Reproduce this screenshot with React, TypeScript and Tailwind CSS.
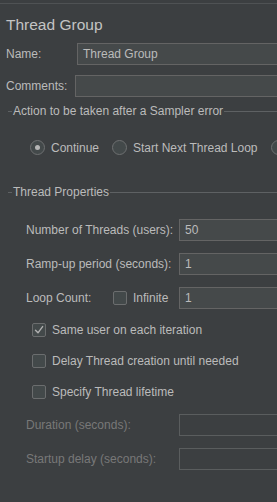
import React from "react";

function Field({ value = "", disabled = false, className = "" }: { value?: string; disabled?: boolean; className?: string }) {
  return (
    <div
      className={
        "h-[22px] flex-1 -mr-[20px] flex items-center pl-[5px] border " +
        (disabled ? "bg-[#3c3f41] border-[#5a5d5e]" : "bg-[#45494a] border-[#646464]") +
        " " +
        className
      }
    >
      <span className="text-[12px] text-[#bbbbbb] leading-none">{value}</span>
    </div>
  );
}

function Legend({ text }: { text: string }) {
  return (
    <div className="h-[14px] flex items-center pl-[8px]">
      <div className="w-[4px] h-px bg-[#5e6163]" />
      <span className="px-[1px] text-[12px] text-[#bbbbbb] leading-none">{text}</span>
      <div className="flex-1 h-px bg-[#5e6163]" />
    </div>
  );
}

function Radio({ checked = false }: { checked?: boolean }) {
  return (
    <div className="w-[15px] h-[15px] shrink-0 rounded-full border border-[#6e7071] bg-[#43494a] flex items-center justify-center">
      {checked && <div className="w-[5px] h-[5px] rounded-full bg-[#b5b5b5]" />}
    </div>
  );
}

function Check({ checked = false }: { checked?: boolean }) {
  return (
    <div className="w-[14px] h-[14px] shrink-0 rounded-[2px] border border-[#6b6d6e] bg-[#43494a] flex items-center justify-center">
      {checked && (
        <svg width="10" height="10" viewBox="0 0 10 10" fill="none">
          <path d="M1.5 5.2 L4 7.8 L8.6 1.6" stroke="#b0b0b0" strokeWidth="1.4" strokeLinecap="round" strokeLinejoin="round" />
        </svg>
      )}
    </div>
  );
}

export default function App() {
  return (
    <div
      className="w-[277px] h-[502px] overflow-hidden bg-[#3c3f41] text-[#bbbbbb] text-[12px]"
      style={{ fontFamily: '"Liberation Sans", Arial, sans-serif' }}
    >
      <div className="h-[3px]" />
      <div className="h-px bg-[#4f5254]" />

      <div className="mt-[11px] h-[20px] pl-[6px] flex items-center">
        <h1 className="text-[15.5px] leading-none text-[#c4c4c4]">Thread Group</h1>
      </div>

      {/* name + comments */}
      <div className="mt-[8px] flex items-center pl-[6px]">
        <span className="w-[71px] leading-none">Name:</span>
        <Field value="Thread Group" />
      </div>
      <div className="mt-[10px] flex items-center pl-[6px]">
        <span className="w-[69px] leading-none">Comments:</span>
        <Field />
      </div>

      {/* sampler error action */}
      <div className="mt-[7px]">
        <Legend text="Action to be taken after a Sampler error" />
      </div>
      <div className="mt-[22px] h-[15px] flex items-center pl-[30px] whitespace-nowrap">
        <Radio checked />
        <span className="ml-[6px] w-[61px] shrink-0 leading-none">Continue</span>
        <Radio />
        <span className="ml-[6px] w-[138px] shrink-0 leading-none">Start Next Thread Loop</span>
        <Radio />
      </div>

      {/* thread properties */}
      <div className="mt-[30px]">
        <Legend text="Thread Properties" />
      </div>

      <div className="mt-[20px] flex items-center pl-[26px]">
        <span className="w-[153px] leading-none">Number of Threads (users):</span>
        <Field value="50" />
      </div>
      <div className="mt-[12px] flex items-center pl-[26px]">
        <span className="w-[153px] leading-none">Ramp-up period (seconds):</span>
        <Field value="1" />
      </div>
      <div className="mt-[12px] flex items-center pl-[26px]">
        <span className="w-[87px] leading-none">Loop Count:</span>
        <Check />
        <span className="ml-[6px] w-[46px] leading-none">Infinite</span>
        <Field value="1" />
      </div>

      <div className="mt-[14px] h-[14px] flex items-center pl-[32px]">
        <Check checked />
        <span className="ml-[6px] leading-none">Same user on each iteration</span>
      </div>
      <div className="mt-[17px] h-[14px] flex items-center pl-[32px]">
        <Check />
        <span className="ml-[6px] leading-none">Delay Thread creation until needed</span>
      </div>
      <div className="mt-[17px] h-[14px] flex items-center pl-[32px]">
        <Check />
        <span className="ml-[6px] leading-none">Specify Thread lifetime</span>
      </div>

      <div className="mt-[15px] flex items-center pl-[26px] text-[#787878]">
        <span className="w-[153px] leading-none">Duration (seconds):</span>
        <Field disabled />
      </div>
      <div className="mt-[12px] flex items-center pl-[26px] text-[#787878]">
        <span className="w-[153px] leading-none">Startup delay (seconds):</span>
        <Field disabled />
      </div>
    </div>
  );
}
